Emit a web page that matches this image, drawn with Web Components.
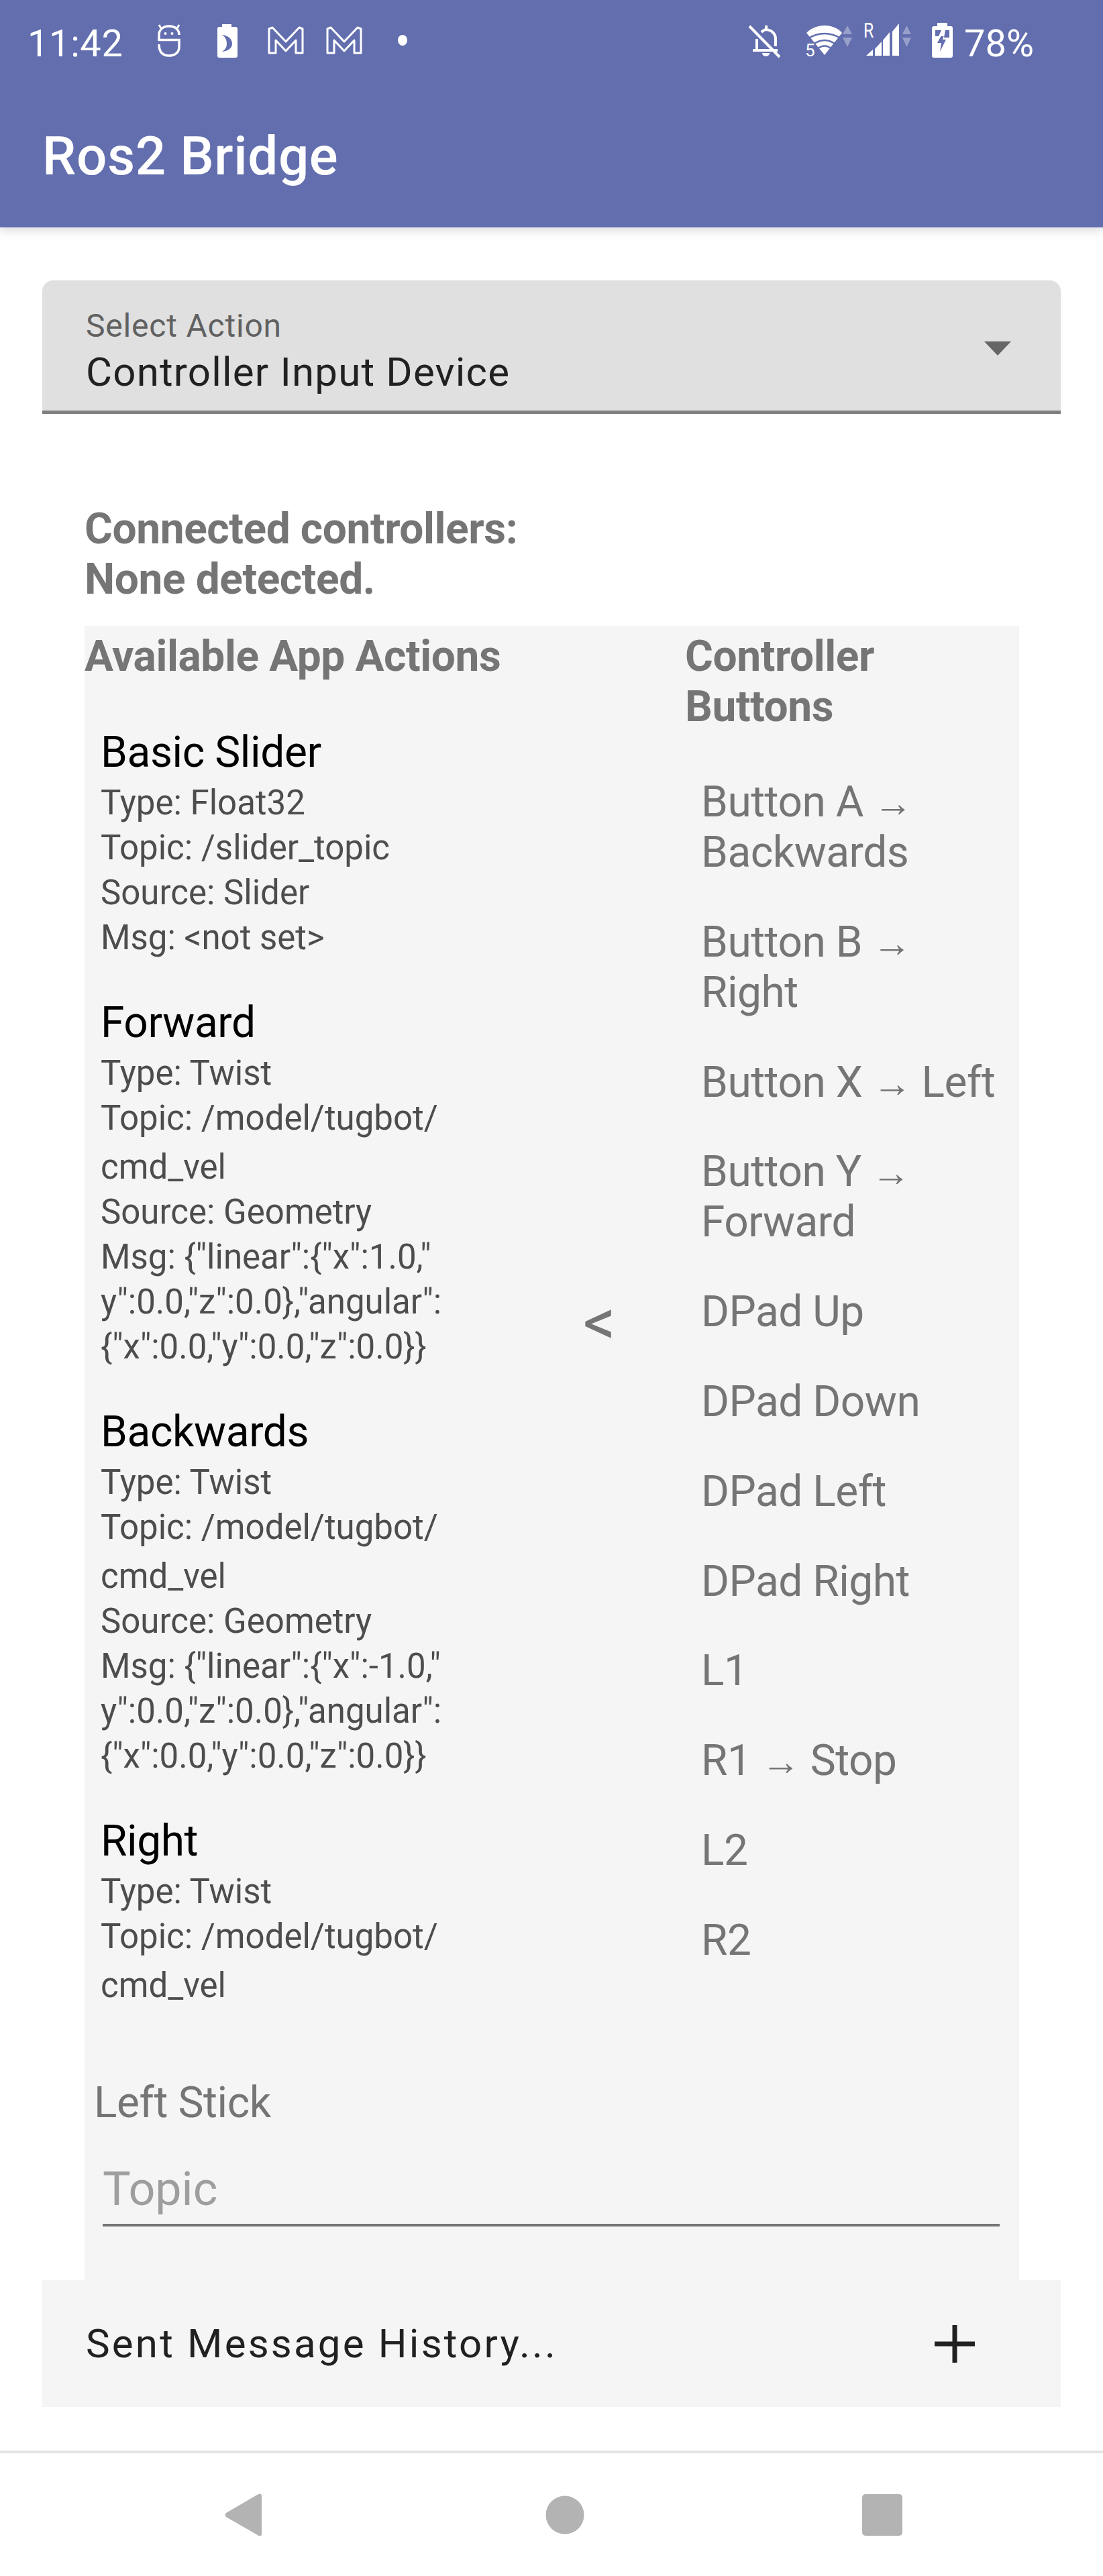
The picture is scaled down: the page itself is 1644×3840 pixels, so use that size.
<!DOCTYPE html>
<html lang="en">
<head>
<meta charset="utf-8">
<title>Ros2 Bridge</title>
<style>
  html, body { margin: 0; padding: 0; background: #fff; }
  body { width: 1644px; height: 3840px; overflow: hidden; font-family: Roboto, "Liberation Sans", sans-serif; }
</style>
</head>
<body>
<app-header title-text="Ros2 Bridge"></app-header>
<select-field label="Select Action" value="Controller Input Device"></select-field>
<connected-status>Connected controllers:<br>None detected.</connected-status>
<mapping-panel>
  <action-item slot="actions" name="Basic Slider">
    <span>Type: Float32</span>
    <span>Topic: /slider_topic</span>
    <span>Source: Slider</span>
    <span>Msg: &lt;not set&gt;</span>
  </action-item>
  <action-item slot="actions" name="Forward">
    <span>Type: Twist</span>
    <span>Topic: /model/tugbot/</span>
    <span class="wrapped">cmd_vel</span>
    <span>Source: Geometry</span>
    <span>Msg: {"linear":{"x":1.0,"</span>
    <span>y":0.0,"z":0.0},"angular":</span>
    <span>{"x":0.0,"y":0.0,"z":0.0}}</span>
  </action-item>
  <action-item slot="actions" name="Backwards">
    <span>Type: Twist</span>
    <span>Topic: /model/tugbot/</span>
    <span class="wrapped">cmd_vel</span>
    <span>Source: Geometry</span>
    <span>Msg: {"linear":{"x":-1.0,"</span>
    <span>y":0.0,"z":0.0},"angular":</span>
    <span>{"x":0.0,"y":0.0,"z":0.0}}</span>
  </action-item>
  <action-item slot="actions" name="Right">
    <span>Type: Twist</span>
    <span>Topic: /model/tugbot/</span>
    <span class="wrapped">cmd_vel</span>
  </action-item>
  <button-item slot="buttons">Button A <i>→</i><br>Backwards</button-item>
  <button-item slot="buttons">Button B <i>→</i><br>Right</button-item>
  <button-item slot="buttons">Button X <i>→</i> Left</button-item>
  <button-item slot="buttons">Button Y <i>→</i><br>Forward</button-item>
  <button-item slot="buttons">DPad Up</button-item>
  <button-item slot="buttons">DPad Down</button-item>
  <button-item slot="buttons">DPad Left</button-item>
  <button-item slot="buttons">DPad Right</button-item>
  <button-item slot="buttons">L1</button-item>
  <button-item slot="buttons">R1 <i>→</i> Stop</button-item>
  <button-item slot="buttons">L2</button-item>
  <button-item slot="buttons">R2</button-item>
  <stick-input slot="sticks" label="Left Stick" placeholder="Topic"></stick-input>
</mapping-panel>
<history-row>Sent Message History...</history-row>
<nav-bar></nav-bar>

<script>
class AppHeader extends HTMLElement {
  constructor() {
    super();
    this.shadowDOM = this.attachShadow({ mode: 'open' });
  }

  connectedCallback() {
    this.render();
  }

  render() {
    this.shadowDOM.innerHTML = `
      <style>
      :host {
        display: block;
        height: 339px;
        background: #626eae;
        color: #fff;
        box-shadow: 0 5px 14px rgba(0, 0, 0, 0.14);
        position: relative;
      }
      .status {
        display: flex;
        align-items: center;
        height: 120px;
        padding: 0 103px 0 41px;
        font-size: 56px;
        line-height: 66px;
      }
      .status svg { display: block; fill: #fff; flex: none; overflow: visible; }
      .status span { padding-top: 10px; }
      .time { width: 193px; letter-spacing: 0.6px; }
      .spacer { flex: 1; }
      h1 {
        margin: 0;
        padding: 66px 0 0 63px;
        font-size: 80px;
        line-height: 94px;
        font-weight: 500;
        letter-spacing: 0.6px;
      }
      </style>
      <div class="status">
        <span class="time">11:42</span>
        <svg width="36" height="50" viewBox="0 0 36 50" fill="none" style="fill:none;margin-top:1px" stroke="#fff" stroke-width="3.500">
          <path d="M33 16C33 8 27 3 18 3S3 8 3 16v7.500h30V34c0 8-6 13-15 13S3 42 3 30"/>
          <path d="M3 1l3 5M33 1l-3 5" stroke-width="3"/>
          <circle cx="12.500" cy="14" r="2" fill="#fff" stroke="none"/>
          <circle cx="22.500" cy="14" r="2" fill="#fff" stroke="none"/>
        </svg>
        <svg width="30" height="50" viewBox="0 0 30 50" style="margin:1px 0 0 54px">
          <path d="M7 0h14v4h6a3 3 0 0 1 3 3v40a3 3 0 0 1-3 3H3a3 3 0 0 1-3-3V7a3 3 0 0 1 3-3h4z"/>
          <path d="M7 16c9 1 15 6 15 13s-6 11-15 12c5-3 7-7 7-12s-2-10-7-13z" fill="#626eae"/>
        </svg>
        <svg width="54" height="42" viewBox="0 0 54 42" style="margin:0 0 0 45px;fill:none" stroke="#fff" stroke-width="3" stroke-linejoin="round">
          <path d="M2 4l5-2 20 21L47 2l5 2v36H42V21L27 37 12 21v19H2z"/>
        </svg>
        <svg width="54" height="42" viewBox="0 0 54 42" style="margin:0 0 0 33px;fill:none" stroke="#fff" stroke-width="3" stroke-linejoin="round">
          <path d="M2 4l5-2 20 21L47 2l5 2v36H42V21L27 37 12 21v19H2z"/>
        </svg>
        <svg width="16" height="16" viewBox="0 0 16 16" style="margin:0 0 0 52px"><ellipse cx="8" cy="8" rx="7" ry="8"/></svg>
        <span class="spacer"></span>
        <svg width="50" height="50" viewBox="0 0 50 50" style="fill:none;margin-top:1px" stroke="#fff" stroke-width="4">
          <path d="M2 3l45 46M13 22v17M7 39h37M41 33V22c0-7-5-13-14-14-3 0-5 2-7 4M27 2v6"/>
          <path d="M21 43h11a5.500 5 0 0 1-11 0z" fill="#fff" stroke="none"/>
        </svg>
        <svg width="70" height="50" viewBox="0 0 70 50" style="margin:1px 0 0 36px">
          <path d="M28 46L1 13C8 6 17 2 28 2s20 4 26 11z"/>
          <g fill="none" stroke="#626eae" stroke-width="2.500"><path d="M4 21Q28 7 52 21M10 31Q28 17 46 31M16 38Q28 27 40 38"/></g>
          <path d="M55 15l7-13 7 13zM55 20l7 14 7-14z" opacity="0.35"/>
          <text x="-1" y="48" font-size="26" font-family="Roboto" stroke="#626eae" stroke-width="4" paint-order="stroke">5</text>
        </svg>
        <svg width="72" height="54" viewBox="0 0 72 54" style="margin:-1px 0 0 16px">
          <text transform="translate(0 23) scale(0.8 1)" font-size="31" font-family="Roboto">R</text>
          <path d="M4 50l10-9v9zM17 50V40l10-11v21zM29 50V27l10-12v35zM43 50V14L53 2v48z"/>
          <path d="M58 18l6.500-13 6.500 13zM58 23l6.500 14 6.500-14z" opacity="0.35"/>
        </svg>
        <svg width="31" height="52" viewBox="0 0 31 52" style="margin:0 0 0 30px">
          <path d="M8 0h15v5h5a3 3 0 0 1 3 3v41a3 3 0 0 1-3 3H3a3 3 0 0 1-3-3V8a3 3 0 0 1 3-3h5z"/>
          <path d="M5 11h9l-4 9H5zM20 11h6v11h-8zM13.500 20L8 30h6l-2 13 9-18h-5l1.500-5z" fill="#626eae"/>
        </svg>
        <span style="margin-left:17px">78%</span>
      </div>
      <h1>${this.getAttribute('title-text')}</h1>
    `;
  }
}

class SelectField extends HTMLElement {
  constructor() {
    super();
    this.shadowDOM = this.attachShadow({ mode: 'open' });
  }

  connectedCallback() {
    this.render();
  }

  render() {
    this.shadowDOM.innerHTML = `
      <style>
      :host {
        display: flex;
        align-items: flex-start;
        justify-content: space-between;
        box-sizing: border-box;
        height: 199px;
        margin: 79px 63px 0;
        padding: 40px 74px 0 65px;
        background: #e0e0e0;
        border-bottom: 5px solid #7f7f7f;
        border-radius: 16px 16px 0 0;
      }
      .label { font-size: 48px; line-height: 56px; color: #616161; letter-spacing: 0.8px; }
      .value { font-size: 60px; line-height: 75px; margin-top: 3px; color: #212121; letter-spacing: 1.2px; }
      svg { margin-top: 51px; display: block; }
      </style>
      <div>
        <div class="label">${this.getAttribute('label')}</div>
        <div class="value">${this.getAttribute('value')}</div>
      </div>
      <svg width="40" height="21" viewBox="0 0 40 21"><path d="M0 0h40L20 21z" fill="#666"/></svg>
    `;
  }
}

class ConnectedStatus extends HTMLElement {
  constructor() {
    super();
    this.shadowDOM = this.attachShadow({ mode: 'open' });
  }

  connectedCallback() {
    this.shadowDOM.innerHTML = `
      <style>
      :host {
        display: block;
        margin: 134px 0 32px 126px;
        font-size: 64px;
        line-height: 75px;
        font-weight: 700;
        letter-spacing: -0.4px;
        color: #757575;
      }
      </style>
      <slot></slot>
    `;
  }
}

class MappingPanel extends HTMLElement {
  constructor() {
    super();
    this.shadowDOM = this.attachShadow({ mode: 'open' });
  }

  connectedCallback() {
    this.shadowDOM.innerHTML = `
      <style>
      :host {
        display: block;
        box-sizing: border-box;
        width: 1393px;
        height: 2466px;
        margin-left: 126px;
        padding-top: 8px;
        background: #f5f5f5;
        font-family: Roboto, sans-serif;
      }
      .columns {
        display: grid;
        grid-template-columns: 637px 258px 498px;
        height: 2060px;
        overflow: hidden;
      }
      h2 {
        margin: 0 0 68px;
        font-size: 64px;
        line-height: 75px;
        font-weight: 700;
        letter-spacing: -0.4px;
        color: #757575;
      }
      .arrow {
        align-self: center;
        justify-self: start;
        margin-left: 106px;
        font-size: 96px;
        line-height: 100px;
        font-weight: 400;
        color: #757575;
      }
      .actions { overflow: hidden; }
      .buttons h2 { margin-bottom: 67px; }
      </style>
      <div class="columns">
        <div class="actions">
          <h2>Available App Actions</h2>
          <slot name="actions"></slot>
        </div>
        <div class="arrow">&lt;</div>
        <div class="buttons">
          <h2>Controller<br>Buttons</h2>
          <slot name="buttons"></slot>
        </div>
      </div>
      <slot name="sticks"></slot>
    `;
  }
}

class ActionItem extends HTMLElement {
  constructor() {
    super();
    this.shadowDOM = this.attachShadow({ mode: 'open' });
  }

  connectedCallback() {
    this.shadowDOM.innerHTML = `
      <style>
      :host { display: block; padding: 0 0 56px 24px; }
      .name { font-size: 64px; line-height: 75px; color: #000; letter-spacing: -0.4px; margin-bottom: 4px; }
      ::slotted(span) {
        display: block;
        font-size: 51px;
        line-height: 67px;
        color: #4d4d4d;
        white-space: nowrap;
      }
      ::slotted(span.wrapped) { margin-top: 6px; }
      </style>
      <div class="name">${this.getAttribute('name')}</div>
      <slot></slot>
    `;
  }
}

class ButtonItem extends HTMLElement {
  constructor() {
    super();
    this.shadowDOM = this.attachShadow({ mode: 'open' });
  }

  connectedCallback() {
    this.shadowDOM.innerHTML = `
      <style>
      :host {
        display: block;
        margin: 0 0 58.800px 24px;
        font-size: 64px;
        line-height: 75px;
        letter-spacing: -0.5px;
        color: #757575;
        white-space: nowrap;
      }
      ::slotted(i) { font-style: normal; font-size: 58px; line-height: 0; }
      </style>
      <slot></slot>
    `;
  }
}

class StickInput extends HTMLElement {
  constructor() {
    super();
    this.shadowDOM = this.attachShadow({ mode: 'open' });
  }

  connectedCallback() {
    this.shadowDOM.innerHTML = `
      <style>
      :host { display: block; padding: 96px 29px 0 14px; }
      .label { font-size: 64px; line-height: 75px; letter-spacing: -0.4px; color: #757575; }
      .field {
        margin: 50px 0 0 13px;
        padding: 0 0 11px;
        font-size: 70px;
        line-height: 82px;
        color: #9e9e9e;
        border-bottom: 4px solid #757575;
      }
      </style>
      <div class="label">${this.getAttribute('label')}</div>
      <div class="field">${this.getAttribute('placeholder')}</div>
    `;
  }
}

class HistoryRow extends HTMLElement {
  constructor() {
    super();
    this.shadowDOM = this.attachShadow({ mode: 'open' });
  }

  connectedCallback() {
    this.shadowDOM.innerHTML = `
      <style>
      :host {
        display: flex;
        align-items: center;
        justify-content: space-between;
        box-sizing: border-box;
        height: 189px;
        margin: 0 63px;
        padding: 0 128px 0 65px;
        background: #f5f5f5;
        font-size: 60px;
        color: #212121;
        letter-spacing: 3.2px;
      }
      svg { display: block; }
      </style>
      <span><slot></slot></span>
      <svg width="60" height="56" viewBox="0 0 60 56"><path d="M26.500 0h7v24.500H60v7H33.500V56h-7V31.500H0v-7h26.500z" fill="#212121"/></svg>
    `;
  }
}

class NavBar extends HTMLElement {
  constructor() {
    super();
    this.shadowDOM = this.attachShadow({ mode: 'open' });
  }

  connectedCallback() {
    this.shadowDOM.innerHTML = `
      <style>
      :host {
        display: block;
        box-sizing: border-box;
        height: 187px;
        margin-top: 65px;
        border-top: 4px solid #e4e4e4;
        background: #fff;
      }
      .keys {
        display: flex;
        align-items: center;
        height: 183px;
        padding: 0 0 0 335px;
      }
      svg { display: block; fill: #b3b3b3; }
      </style>
      <div class="keys">
        <svg width="56" height="64" viewBox="0 0 56 64"><path d="M52 0.500a3 3 0 0 1 3 3v57a3 3 0 0 1-3 3 3 3 0 0 1-2-1L2 35a4 4 0 0 1 0-6L50 1a3 3 0 0 1 2-0.500z"/></svg>
        <svg width="58" height="58" viewBox="0 0 58 58" style="margin-left:422px"><circle cx="29" cy="29" r="28.500"/></svg>
        <svg width="60" height="62" viewBox="0 0 60 62" style="margin-left:414px"><rect width="60" height="62" rx="5"/></svg>
      </div>
    `;
  }
}

customElements.define('app-header', AppHeader);
customElements.define('select-field', SelectField);
customElements.define('connected-status', ConnectedStatus);
customElements.define('mapping-panel', MappingPanel);
customElements.define('action-item', ActionItem);
customElements.define('button-item', ButtonItem);
customElements.define('stick-input', StickInput);
customElements.define('history-row', HistoryRow);
customElements.define('nav-bar', NavBar);
</script>
</body>
</html>
